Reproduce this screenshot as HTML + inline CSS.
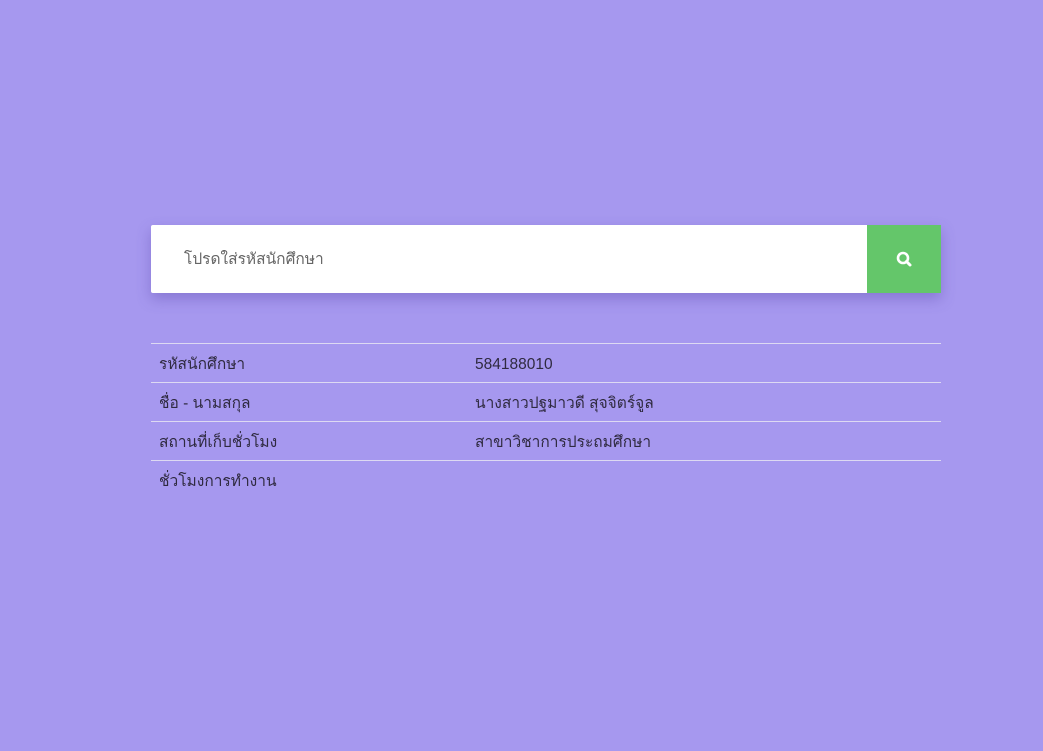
<!DOCTYPE html>
<html><head><meta charset="utf-8"><style>
html,body{margin:0;padding:0;width:1043px;height:751px;overflow:hidden;background:#a698ef;font-family:"Liberation Sans",sans-serif;color:#2f2a40}
.box{position:absolute;left:151px;top:225px;width:790px;height:68px;background:#fff;border-radius:2px;box-shadow:0 6px 14px rgba(80,60,160,.35)}
.ph{position:absolute;left:33px;top:1px;line-height:68px;font-size:15.5px;color:#666}
.btn{position:absolute;right:0;top:0;width:74px;height:68px;background:#64c66a}
.row{position:absolute;left:151px;width:790px;height:39px;border-top:1px solid #ddd9f2;font-size:15.5px;line-height:41px}
.row span{position:absolute;left:8px}
.row span+span{left:324px}
</style></head><body>
<div class="box"><div class="ph">โปรดใส่รหัสนักศึกษา</div>
<div class="btn"><svg width="74" height="68" viewBox="0 0 74 68"><circle cx="36" cy="33" r="5" fill="none" stroke="#fff" stroke-width="2.6"/><line x1="39.5" y1="36.5" x2="43" y2="40" stroke="#fff" stroke-width="3" stroke-linecap="round"/></svg></div></div>
<div class="row" style="top:343px"><span>รหัสนักศึกษา</span><span>584188010</span></div>
<div class="row" style="top:382px"><span>ชื่อ - นามสกุล</span><span>นางสาวปฐมาวดี สุจจิตร์จูล</span></div>
<div class="row" style="top:421px"><span>สถานที่เก็บชั่วโมง</span><span>สาขาวิชาการประถมศึกษา</span></div>
<div class="row" style="top:460px"><span>ชั่วโมงการทำงาน</span></div>
</body></html>
